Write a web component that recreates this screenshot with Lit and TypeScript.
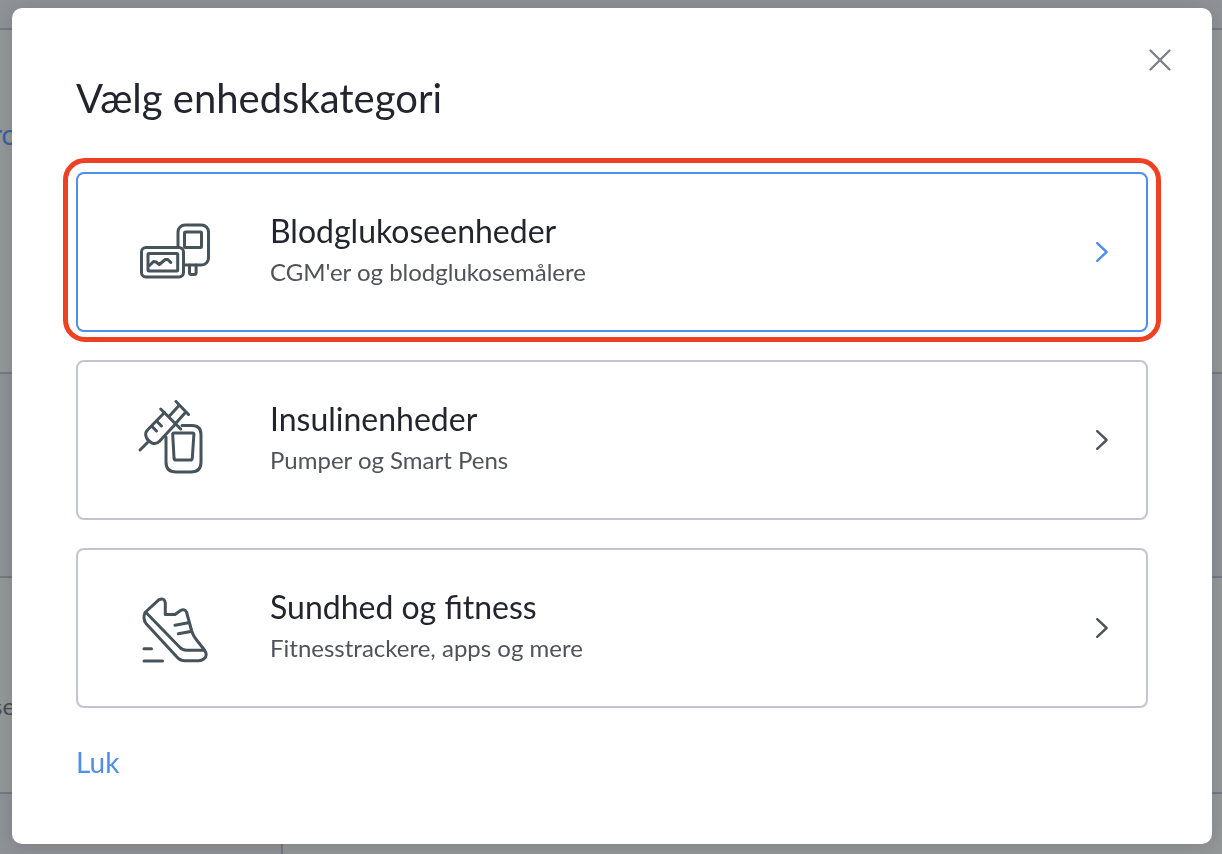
import { LitElement, html, css, svg } from "lit";
import { customElement, property } from "lit/decorators.js";
import { classMap } from "lit/directives/class-map.js";

const glucoseIcon = svg`
  <rect x="44" y="13" width="30.5" height="40" rx="7" />
  <rect x="50.5" y="20" width="17" height="15.5" rx="1" />
  <path d="M55.5 53v7.5q0 2 2 2h2.600q2 0 2-2V53" />
  <rect x="7.500" y="35.500" width="42" height="29.500" rx="4.500" fill="#fff" />
  <rect x="14" y="41.500" width="29.700" height="17.500" rx="1" />
  <path d="M15.500 53.500l4-4 2.500.5 3.300 2.500 6-5h2.500l3 3" />`;

const insulinIcon = svg`
  <path d="M48 25.500h10q9 0 9 9V62q0 10-10 10H42q-10 0-10-10V37" />
  <path d="M40 33h18.700q1.300 0 1.200 1.400L58.300 58q-.2 2-2 2H42q-1.800 0-2-2L38.700 34.400q-.1-1.400 1.300-1.400z" />
  <path d="M6 50l9-9" />
  <path d="M26.700 9l20 20" />
  <path d="M30.300 12.700L14 29.500q-3.500 3.500-1.800 7.500 1.500 4 5.500 5.800 4.500 2.200 8-1.800L41.500 24" />
  <path d="M18 26.500l4.500 4.500M23 21.500l4.500 4.500" />
  <path d="M35 16.500L45 5.500M42 23l9-10" />
  <path d="M42 1.500l12.500 13" />`;

const fitnessIcon = svg`
  <path d="M11 24.500L25 11.700q5.500-2.500 6.300 3.300v11.500H41l5.500-4q4.500-2 6 1.500L57.700 43q1.500 5 4.500 8.500l7.500 9.500q5 6.500 0 10-2 1.700-5 1.700H51q-5 0-8.300-4L12 35.500Q8.500 30.500 11 24.500z" />
  <path d="M12 24.500l33.500 34.500q3 3.300 7 3.300H70" />
  <path d="M41 37.300l13.300-2.500M44.300 45.800l12.500-2.300" />
  <path d="M10 60.700h7.500M10 73h18.500" />`;

@customElement("category-card")
class CategoryCard extends LitElement {
  @property() heading = "";
  @property() description = "";
  @property({ attribute: false }) icon: unknown;
  @property({ type: Boolean }) highlighted = false;

  static styles = css`
    :host {
      display: block;
    }
    .card {
      position: relative;
      box-sizing: border-box;
      display: flex;
      align-items: center;
      gap: 56px;
      width: 100%;
      min-height: 160px;
      padding: 36px 38px 36px 56px;
      border: 2px solid #c1c5d1;
      border-radius: 8px;
      background: #fff;
      color: #505359;
      font: inherit;
      text-align: left;
      cursor: pointer;
    }
    .highlighted {
      border-color: #4f8eea;
    }
    .highlighted::after {
      content: "";
      position: absolute;
      inset: -16px -15px -12px;
      border: 5px solid #ee4023;
      border-radius: 22px;
      pointer-events: none;
    }
    .icon {
      flex: none;
      width: 80px;
      height: 80px;
      fill: none;
      stroke: #46535a;
      stroke-width: 3;
      stroke-linecap: round;
      stroke-linejoin: round;
    }
    .text {
      flex: 1;
      display: flex;
      flex-direction: column;
      gap: 5px;
      padding-bottom: 5px;
    }
    .heading {
      font-size: 32px;
      line-height: 40px;
      color: #22252d;
    }
    .description {
      font-size: 24px;
      line-height: 32px;
    }
    .chevron {
      flex: none;
      width: 12px;
      height: 20px;
      fill: none;
      stroke: #505359;
      stroke-width: 2.4;
      stroke-linecap: round;
      stroke-linejoin: round;
    }
    .highlighted .chevron {
      stroke: #4f8eea;
    }
  `;

  render() {
    return html`
      <button
        type="button"
        class=${classMap({ card: true, highlighted: this.highlighted })}
      >
        <svg class="icon" viewBox="0 0 80 80" aria-hidden="true">${this.icon}</svg>
        <span class="text">
          <span class="heading">${this.heading}</span>
          <span class="description">${this.description}</span>
        </span>
        <svg class="chevron" viewBox="0 0 12 20" aria-hidden="true">
          <path d="M1.200 1.200L10.600 10l-9.400 8.800" />
        </svg>
      </button>
    `;
  }
}

@customElement("app-root")
class AppRoot extends LitElement {
  static styles = css`
    :host {
      display: block;
      font-family: Lato, "Open Sans", sans-serif;
    }
    .page {
      display: flex;
      flex-direction: column;
      height: 100vh;
      overflow: hidden;
      background: #959899;
    }
    .band {
      box-sizing: border-box;
      flex: none;
      border-bottom: 2px solid #747b84;
    }
    .shaded {
      background: #8f9296;
    }
    .bar {
      height: 30px;
    }
    .intro {
      height: 344px;
      padding-top: 88px;
    }
    .gap {
      height: 204px;
    }
    .details {
      height: 216px;
      padding-top: 112px;
    }
    .peek {
      display: block;
      margin-left: -8px;
      line-height: 32px;
    }
    .link {
      color: #3c62a3;
      font-size: 28px;
      text-decoration: none;
    }
    .note {
      color: #4a4d52;
      font-size: 24px;
    }
    .foot {
      flex: 1;
      display: flex;
    }
    .side {
      box-sizing: border-box;
      flex: none;
      width: 283px;
      border-right: 2px solid #747b84;
    }
    .overlay {
      position: fixed;
      inset: 0;
      overflow: auto;
      padding: 8px 10px 10px 12px;
    }
    .dialog {
      position: relative;
      padding: 64px;
      border-radius: 10px;
      background: #fff;
      box-shadow: 0 2px 20px rgba(0, 0, 0, 0.15);
    }
    .close {
      position: absolute;
      top: 36px;
      right: 36px;
      width: 32px;
      height: 32px;
      padding: 0;
      border: 0;
      background: none;
      cursor: pointer;
    }
    .cross {
      display: block;
      width: 32px;
      height: 32px;
      stroke: #7f8186;
      stroke-width: 2.4;
      stroke-linecap: round;
    }
    .title {
      margin: 0 0 48px;
      color: #22252d;
      font-size: 40px;
      font-weight: 400;
      line-height: 52px;
    }
    .cards {
      display: flex;
      flex-direction: column;
      gap: 28px;
    }
    .dismiss {
      display: block;
      margin: 38px 0 2px;
      padding: 0;
      border: 0;
      background: none;
      color: #4f8eea;
      font: inherit;
      font-size: 28px;
      line-height: 32px;
      cursor: pointer;
    }
  `;

  render() {
    return html`
      <div class="page" inert>
        <div class="band shaded bar"></div>
        <div class="band intro"><a class="peek link" href="#">ro</a></div>
        <div class="band shaded gap"></div>
        <div class="band details"><span class="peek note">se</span></div>
        <div class="foot"><div class="side shaded"></div></div>
      </div>
      <div class="overlay">
        <section class="dialog" role="dialog" aria-modal="true" aria-labelledby="title">
          <h1 class="title" id="title">Vælg enhedskategori</h1>
          <button class="close" type="button" aria-label="Luk">
            <svg class="cross" viewBox="0 0 32 32" aria-hidden="true">
              <path d="M6.500 6.500l19 19M25.500 6.500l-19 19" />
            </svg>
          </button>
          <div class="cards">
            <category-card
              heading="Blodglukoseenheder"
              description="CGM'er og blodglukosemålere"
              .icon=${glucoseIcon}
              highlighted
            ></category-card>
            <category-card
              heading="Insulinenheder"
              description="Pumper og Smart Pens"
              .icon=${insulinIcon}
            ></category-card>
            <category-card
              heading="Sundhed og fitness"
              description="Fitnesstrackere, apps og mere"
              .icon=${fitnessIcon}
            ></category-card>
          </div>
          <button class="dismiss" type="button">Luk</button>
        </section>
      </div>
    `;
  }
}
